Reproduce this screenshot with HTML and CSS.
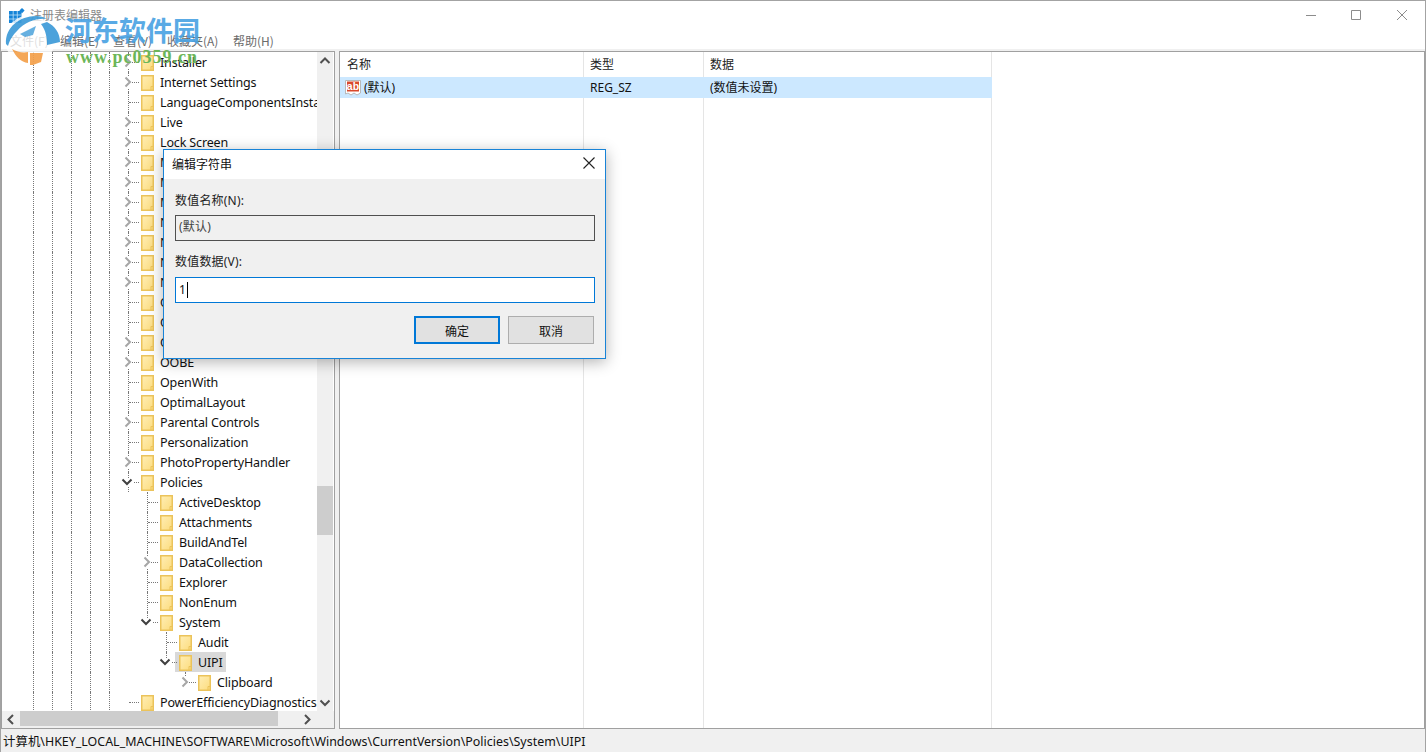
FILE: index.html
```html
<!DOCTYPE html>
<html lang="zh-CN">
<head>
<meta charset="utf-8">
<title>注册表编辑器</title>
<link rel="stylesheet" href="styles.css">
</head>
<body>
<svg class="sprite" width="0" height="0" aria-hidden="true">
  <defs>
    <linearGradient id="fg" x1="0" y1="0" x2="1" y2="1"><stop offset="0" stop-color="#ffeeb5"/><stop offset="1" stop-color="#fcdc7e"/></linearGradient>
    <symbol id="folder" viewBox="0 0 13 16">
      <path d="M.75.75H12.25V15.25H.75Z" fill="url(#fg)" stroke="#ebc35b" stroke-width="1.5"/>
      <path d="M10 11.5V15.5M10 11.5H12.5" fill="none" stroke="#ebc35b" stroke-width="1"/>
    </symbol>
    <symbol id="cr" viewBox="0 0 8 12"><path d="M1.5 1.5 6 6 1.5 10.5" fill="none" stroke="#a6a6a6" stroke-width="2"/></symbol>
    <symbol id="cd" viewBox="0 0 12 8"><path d="M1.5 1.5 6 6 10.5 1.5" fill="none" stroke="#404040" stroke-width="2"/></symbol>
  </defs>
</svg>
<div class="window">
  <header class="titlebar">
    <svg class="appicon" width="16" height="15" viewBox="0 0 16 15">
      <path d="M0 3H12.500V15H0Z" fill="#1584d8"/>
      <path d="M4.200 3V15M8.300 3V15M0 7H12.500M0 11H12.500" stroke="#bfe2f8" stroke-width=".8"/>
      <path d="M13 0l2.600 2.600-2.600 2.600-2.600-2.600Z" fill="#1584d8"/>
    </svg>
    <span class="apptitle">注册表编辑器</span>
    <div class="winctl">
      <svg class="ctl ctl-min" width="10" height="10" viewBox="0 0 10 10"><path d="M0 5.500H10" stroke="#8c8c8c"/></svg>
      <svg class="ctl ctl-max" width="10" height="10" viewBox="0 0 10 10"><path d="M.5.5H9.500V9.500H.5Z" fill="none" stroke="#8c8c8c"/></svg>
      <svg class="ctl ctl-close" width="10" height="10" viewBox="0 0 10 10"><path d="M0 0 10 10M10 0 0 10" stroke="#8c8c8c"/></svg>
    </div>
  </header>
  <nav class="menubar">
    <span class="menu m1">文件(F)</span>
    <span class="menu m2">编辑(E)</span>
    <span class="menu m3">查看(V)</span>
    <span class="menu m4">收藏夹(A)</span>
    <span class="menu">帮助(H)</span>
  </nav>
  <main class="main">
    <section class="treepanel">
      <div class="treewrap">
        <div class="tree">
          <div class="row"><i class="g"></i><i class="g"></i><i class="g"></i><i class="g"></i><i class="g"></i><span class="twig"><svg class="chev"><use href="#cr"/></svg></span><svg class="folder"><use href="#folder"/></svg><span class="label">Installer</span></div>
          <div class="row"><i class="g"></i><i class="g"></i><i class="g"></i><i class="g"></i><i class="g"></i><span class="twig"><svg class="chev"><use href="#cr"/></svg></span><svg class="folder"><use href="#folder"/></svg><span class="label">Internet Settings</span></div>
          <div class="row"><i class="g"></i><i class="g"></i><i class="g"></i><i class="g"></i><i class="g"></i><span class="twig"></span><svg class="folder"><use href="#folder"/></svg><span class="label">LanguageComponentsInstaller</span></div>
          <div class="row"><i class="g"></i><i class="g"></i><i class="g"></i><i class="g"></i><i class="g"></i><span class="twig"><svg class="chev"><use href="#cr"/></svg></span><svg class="folder"><use href="#folder"/></svg><span class="label">Live</span></div>
          <div class="row"><i class="g"></i><i class="g"></i><i class="g"></i><i class="g"></i><i class="g"></i><span class="twig"><svg class="chev"><use href="#cr"/></svg></span><svg class="folder"><use href="#folder"/></svg><span class="label">Lock Screen</span></div>
          <div class="row"><i class="g"></i><i class="g"></i><i class="g"></i><i class="g"></i><i class="g"></i><span class="twig"><svg class="chev"><use href="#cr"/></svg></span><svg class="folder"><use href="#folder"/></svg><span class="label">MCT</span></div>
          <div class="row"><i class="g"></i><i class="g"></i><i class="g"></i><i class="g"></i><i class="g"></i><span class="twig"><svg class="chev"><use href="#cr"/></svg></span><svg class="folder"><use href="#folder"/></svg><span class="label">Media Center</span></div>
          <div class="row"><i class="g"></i><i class="g"></i><i class="g"></i><i class="g"></i><i class="g"></i><span class="twig"><svg class="chev"><use href="#cr"/></svg></span><svg class="folder"><use href="#folder"/></svg><span class="label">MMDevices</span></div>
          <div class="row"><i class="g"></i><i class="g"></i><i class="g"></i><i class="g"></i><i class="g"></i><span class="twig"><svg class="chev"><use href="#cr"/></svg></span><svg class="folder"><use href="#folder"/></svg><span class="label">NcdAutoSetup</span></div>
          <div class="row"><i class="g"></i><i class="g"></i><i class="g"></i><i class="g"></i><i class="g"></i><span class="twig"><svg class="chev"><use href="#cr"/></svg></span><svg class="folder"><use href="#folder"/></svg><span class="label">NetCache</span></div>
          <div class="row"><i class="g"></i><i class="g"></i><i class="g"></i><i class="g"></i><i class="g"></i><span class="twig"><svg class="chev"><use href="#cr"/></svg></span><svg class="folder"><use href="#folder"/></svg><span class="label">NetworkServiceTriggers</span></div>
          <div class="row"><i class="g"></i><i class="g"></i><i class="g"></i><i class="g"></i><i class="g"></i><span class="twig"><svg class="chev"><use href="#cr"/></svg></span><svg class="folder"><use href="#folder"/></svg><span class="label">Notifications</span></div>
          <div class="row"><i class="g"></i><i class="g"></i><i class="g"></i><i class="g"></i><i class="g"></i><span class="twig"></span><svg class="folder"><use href="#folder"/></svg><span class="label">OEMInformation</span></div>
          <div class="row"><i class="g"></i><i class="g"></i><i class="g"></i><i class="g"></i><i class="g"></i><span class="twig"></span><svg class="folder"><use href="#folder"/></svg><span class="label">OneDriveRamps</span></div>
          <div class="row"><i class="g"></i><i class="g"></i><i class="g"></i><i class="g"></i><i class="g"></i><span class="twig"><svg class="chev"><use href="#cr"/></svg></span><svg class="folder"><use href="#folder"/></svg><span class="label">OnDemandInterfaceCache</span></div>
          <div class="row"><i class="g"></i><i class="g"></i><i class="g"></i><i class="g"></i><i class="g"></i><span class="twig"><svg class="chev"><use href="#cr"/></svg></span><svg class="folder"><use href="#folder"/></svg><span class="label">OOBE</span></div>
          <div class="row"><i class="g"></i><i class="g"></i><i class="g"></i><i class="g"></i><i class="g"></i><span class="twig"></span><svg class="folder"><use href="#folder"/></svg><span class="label">OpenWith</span></div>
          <div class="row"><i class="g"></i><i class="g"></i><i class="g"></i><i class="g"></i><i class="g"></i><span class="twig"></span><svg class="folder"><use href="#folder"/></svg><span class="label">OptimalLayout</span></div>
          <div class="row"><i class="g"></i><i class="g"></i><i class="g"></i><i class="g"></i><i class="g"></i><span class="twig"><svg class="chev"><use href="#cr"/></svg></span><svg class="folder"><use href="#folder"/></svg><span class="label">Parental Controls</span></div>
          <div class="row"><i class="g"></i><i class="g"></i><i class="g"></i><i class="g"></i><i class="g"></i><span class="twig"></span><svg class="folder"><use href="#folder"/></svg><span class="label">Personalization</span></div>
          <div class="row"><i class="g"></i><i class="g"></i><i class="g"></i><i class="g"></i><i class="g"></i><span class="twig"><svg class="chev"><use href="#cr"/></svg></span><svg class="folder"><use href="#folder"/></svg><span class="label">PhotoPropertyHandler</span></div>
          <div class="row"><i class="g"></i><i class="g"></i><i class="g"></i><i class="g"></i><i class="g"></i><span class="twig"><svg class="chev down"><use href="#cd"/></svg></span><svg class="folder"><use href="#folder"/></svg><span class="label">Policies</span></div>
          <div class="row"><i class="g"></i><i class="g"></i><i class="g"></i><i class="g"></i><i class="g"></i><i class="g off"></i><span class="twig"></span><svg class="folder"><use href="#folder"/></svg><span class="label">ActiveDesktop</span></div>
          <div class="row"><i class="g"></i><i class="g"></i><i class="g"></i><i class="g"></i><i class="g"></i><i class="g off"></i><span class="twig"></span><svg class="folder"><use href="#folder"/></svg><span class="label">Attachments</span></div>
          <div class="row"><i class="g"></i><i class="g"></i><i class="g"></i><i class="g"></i><i class="g"></i><i class="g off"></i><span class="twig"></span><svg class="folder"><use href="#folder"/></svg><span class="label">BuildAndTel</span></div>
          <div class="row"><i class="g"></i><i class="g"></i><i class="g"></i><i class="g"></i><i class="g"></i><i class="g off"></i><span class="twig"><svg class="chev"><use href="#cr"/></svg></span><svg class="folder"><use href="#folder"/></svg><span class="label">DataCollection</span></div>
          <div class="row"><i class="g"></i><i class="g"></i><i class="g"></i><i class="g"></i><i class="g"></i><i class="g off"></i><span class="twig"></span><svg class="folder"><use href="#folder"/></svg><span class="label">Explorer</span></div>
          <div class="row"><i class="g"></i><i class="g"></i><i class="g"></i><i class="g"></i><i class="g"></i><i class="g off"></i><span class="twig"></span><svg class="folder"><use href="#folder"/></svg><span class="label">NonEnum</span></div>
          <div class="row"><i class="g"></i><i class="g"></i><i class="g"></i><i class="g"></i><i class="g"></i><i class="g off"></i><span class="twig end"><svg class="chev down"><use href="#cd"/></svg></span><svg class="folder"><use href="#folder"/></svg><span class="label">System</span></div>
          <div class="row"><i class="g"></i><i class="g"></i><i class="g"></i><i class="g"></i><i class="g"></i><i class="g off"></i><i class="g off"></i><span class="twig"></span><svg class="folder"><use href="#folder"/></svg><span class="label">Audit</span></div>
          <div class="row"><i class="g"></i><i class="g"></i><i class="g"></i><i class="g"></i><i class="g"></i><i class="g off"></i><i class="g off"></i><span class="twig end"><svg class="chev down"><use href="#cd"/></svg></span><span class="selected"><svg class="folder"><use href="#folder"/></svg><span class="label">UIPI</span></span></div>
          <div class="row"><i class="g"></i><i class="g"></i><i class="g"></i><i class="g"></i><i class="g"></i><i class="g off"></i><i class="g off"></i><i class="g off"></i><span class="twig end"><svg class="chev"><use href="#cr"/></svg></span><svg class="folder"><use href="#folder"/></svg><span class="label">Clipboard</span></div>
          <div class="row"><i class="g"></i><i class="g"></i><i class="g"></i><i class="g"></i><i class="g"></i><span class="twig bare"></span><svg class="folder"><use href="#folder"/></svg><span class="label">PowerEfficiencyDiagnostics</span></div>
        </div>
        <div class="vscroll">
          <svg class="arrow" width="16" height="17" viewBox="0 0 16 17"><path d="M3.500 11 8 6.500 12.500 11" fill="none" stroke="#505050" stroke-width="2"/></svg>
          <div class="vtrack"><div class="vthumb"></div></div>
          <svg class="arrow" width="16" height="17" viewBox="0 0 16 17"><path d="M3.500 6.500 8 11 12.500 6.500" fill="none" stroke="#505050" stroke-width="2"/></svg>
        </div>
      </div>
      <div class="hscroll">
        <svg class="arrow" width="18" height="17" viewBox="0 0 18 17"><path d="M11 4 6.500 8.500 11 13" fill="none" stroke="#505050" stroke-width="2"/></svg>
        <div class="hthumb"></div>
        <svg class="arrow arrow-end" width="16" height="17" viewBox="0 0 16 17"><path d="M6 4 10.500 8.500 6 13" fill="none" stroke="#505050" stroke-width="2"/></svg>
      </div>
    </section>
    <section class="listpanel">
      <div class="cols">
        <div class="col c-name">
          <div class="head">名称</div>
          <div class="cell sel cell-name">
            <svg class="abicon" width="16" height="16" viewBox="0 0 16 16">
              <path d="M.5.5H15.500V13L12 15 9 13 6 15 3 13 .5 14Z" fill="#fff" stroke="#b9b9b9"/>
              <rect x="2" y="1.500" width="12" height="10" fill="#d9482b"/>
              <text x="8" y="10" class="abtext">ab</text>
            </svg>
            <span>(默认)</span>
          </div>
        </div>
        <div class="col c-type">
          <div class="head head-t">类型</div>
          <div class="cell sel">REG_SZ</div>
        </div>
        <div class="col c-data">
          <div class="head head-t">数据</div>
          <div class="cell sel">(数值未设置)</div>
        </div>
      </div>
    </section>
  </main>
  <footer class="statusbar">计算机\HKEY_LOCAL_MACHINE\SOFTWARE\Microsoft\Windows\CurrentVersion\Policies\System\UIPI</footer>
</div>

<div class="dialog" role="dialog">
  <div class="dlgtitle">
    <span>编辑字符串</span>
    <svg class="dlgclose" width="12" height="12" viewBox="0 0 12 12"><path d="M.5.5 11.500 11.500M11.500.5.500 11.500" stroke="#222" stroke-width="1.100"/></svg>
  </div>
  <div class="dlgbody">
    <div class="dlglabel">数值名称(N):</div>
    <div class="field readonly">(默认)</div>
    <div class="dlglabel second">数值数据(V):</div>
    <div class="field active"><span>1</span><i class="caret"></i></div>
    <div class="buttons">
      <button class="btn primary">确定</button>
      <button class="btn">取消</button>
    </div>
  </div>
</div>

<div class="watermark">
  <svg class="wmlogo" width="60" height="54" viewBox="0 0 60 54">
    <circle cx="28" cy="26" r="25" fill="#fff" opacity=".85"/>
    <path d="M4 30C3 13 18 2 34 2c4 0 8 1 11 3-11-1-22 3-30 12C11 21 8 25 6 32Z" fill="#3d9bd8"/>
    <path d="M45 8c8 4 13 11 13 20l-13 3c0-8-1-14-6-21Z" fill="#3d9bd8"/>
    <path d="M18 20 34 12 31 21 23 23Z" fill="#3d9bd8" opacity=".85"/>
    <path d="M10 35c5 3 11 4 16 3v11c-7-1-12-6-16-14Z" fill="#f4a04a"/>
    <path d="M28 39h13l-2 9-8 3h-3Z" fill="#f4a04a"/>
  </svg>
  <div class="wmcn">河东软件园</div>
  <div class="wmurl">www.pc0359.cn</div>
</div>
</body>
</html>
```
FILE: styles.css
```css
* { box-sizing: border-box; }
html, body { margin: 0; padding: 0; height: 100%; overflow: hidden; }
body {
  width: 1426px;
  height: 752px;
  position: relative;
  font-family: "Noto Sans", "Noto Sans CJK SC", sans-serif;
  font-size: 13px;
  color: #111;
  background: #f0f0f0;
}
.sprite { position: absolute; }
.window {
  height: 752px;
  display: flex;
  flex-direction: column;
  border-top: 1px solid #a3a3a3;
  border-left: 1px solid #a3a3a3;
  border-right: 1px solid #a3a3a3;
}

/* title + menu */
.titlebar {
  height: 29px;
  flex: none;
  display: flex;
  align-items: center;
  padding-left: 8px;
  background: #fff;
}
.appicon { flex: none; margin-right: 5px; margin-top: -1px; }
.apptitle { font-size: 12px; color: #8a8a8a; font-family: "Noto Sans CJK SC", sans-serif; margin-top: -2px; }
.winctl { margin-left: auto; display: flex; align-items: center; padding-right: 18px; gap: 35px; margin-top: -1px; }
.ctl { flex: none; }
.ctl-close { margin-left: 1px; }
.menubar {
  height: 21px;
  flex: none;
  display: flex;
  align-items: center;
  gap: 0;
  padding: 3px 0 0 9px;
  background: #fff;
  border-bottom: 2px solid #f0f0f0;
  font-family: "Noto Sans CJK SC", sans-serif;
  font-size: 12px;
  line-height: 16px;
  color: #6b6b6b;
}
.menu { flex: none; }
.m1 { width: 50px; }
.m2 { width: 53px; }
.m3 { width: 54px; }
.m4 { width: 66px; }

/* panes */
.main {
  height: 678px;
  flex: none;
  display: flex;
  gap: 4px;
}
.treepanel {
  width: 334px;
  flex: none;
  display: flex;
  flex-direction: column;
  border: 1px solid #a0a0a0;
  background: #fff;
}
.treewrap { height: 659px; flex: none; display: flex; }
.tree { width: 315px; flex: none; overflow: hidden; }
.row { height: 20px; display: flex; align-items: center; padding-left: 31px; white-space: nowrap; }
.g { width: 19px; height: 20px; flex: none; border-left: 1px dotted #777; }
.g.off { border-left-color: transparent; }
.twig {
  width: 13px;
  height: 20px;
  flex: none;
  position: relative;
  border-left: 1px dotted #777;
}
.twig::after {
  content: "";
  position: absolute;
  left: 0;
  right: 2px;
  top: 10px;
  border-top: 1px dotted #777;
}
.twig.end { border-left-color: transparent; }
.twig.end::before {
  content: "";
  position: absolute;
  left: -1px;
  top: 0;
  height: 10px;
  border-left: 1px dotted #777;
}
.twig.bare { border-left-color: transparent; }
.chev {
  position: absolute;
  z-index: 1;
  left: -5px;
  top: 4px;
  width: 8px;
  height: 12px;
  background: #fff;
}
.chev.down { left: -8px; top: 6px; width: 12px; height: 8px; }
.folder { width: 13px; height: 16px; flex: none; margin-top: 2px; }
.label { margin-left: 6px; line-height: 19px; font-size: 12.5px; letter-spacing: -.14px; color: #111; }
.selected { display: flex; align-items: center; height: 20px; margin-left: -4px; padding: 0 3px 0 4px; background: #d9d9d9; }

.vscroll { width: 16px; flex: none; display: flex; flex-direction: column; background: #f0f0f0; }
.vtrack { flex: 1; position: relative; padding-top: 417px; }
.vthumb { height: 49px; background: #cdcdcd; }
.arrow { flex: none; display: block; }
.hscroll { height: 17px; flex: none; display: flex; background: #f0f0f0; }
.hthumb { width: 258px; height: 15px; background: #cdcdcd; }
.arrow-end { margin-left: 21px; }

.listpanel { flex: 1; border: 1px solid #a0a0a0; background: #fff; overflow: hidden; }
.cols { display: flex; height: 100%; }
.col { flex: none; height: 100%; border-right: 1px solid #e5e5e5; }
.c-name { width: 244px; }
.c-type { width: 120px; }
.c-data { width: 288px; }
.head {
  height: 25px;
  padding-left: 7px;
  line-height: 24px;
  font-family: "Noto Sans CJK SC", sans-serif;
  font-size: 12px;
  color: #222;
}
.head-t { padding-left: 6px; }
.cell {
  height: 21px;
  padding-left: 6px;
  line-height: 21px;
  font-size: 12px;
  font-family: "Noto Sans", "Noto Sans CJK SC", sans-serif;
  margin-right: -1px;
}
.sel { background: #cce8ff; }
.cell-name { display: flex; align-items: center; padding-left: 5px; gap: 3px; }
.abicon { flex: none; }
.abtext { font-family: "Liberation Sans", sans-serif; font-size: 10.5px; font-weight: bold; fill: #fff; text-anchor: middle; }

.statusbar {
  flex: 1;
  display: flex;
  align-items: center;
  padding-left: 2px;
  background: #f0f0f0;
  font-size: 12.45px;
  white-space: nowrap;
  color: #111;
}

/* dialog */
.dialog {
  position: absolute;
  left: 163px;
  top: 149px;
  width: 443px;
  height: 210px;
  border: 1px solid #1883d7;
  background: #f0f0f0;
  box-shadow: 0 3px 14px rgba(0,0,0,.3);
}
.dlgtitle {
  height: 29px;
  display: flex;
  align-items: center;
  padding: 0 10px 3px 8px;
  background: #fff;
  justify-content: space-between;
  font-family: "Noto Sans CJK SC", sans-serif;
  font-size: 12px;
  color: #111;
}
.dlgbody { padding: 12px 10px 0 11px; font-family: "Noto Sans", "Noto Sans CJK SC", sans-serif; font-size: 12px; letter-spacing: .2px; }
.dlglabel { height: 20px; line-height: 20px; margin-bottom: 4px; color: #222; }
.dlglabel.second { margin-top: 11px; margin-bottom: 5px; }
.field { height: 26px; width: 420px; line-height: 22px; padding-left: 3px; display: flex; align-items: center; }
.field.readonly { border: 1px solid #505050; background: #f0f0f0; color: #444; padding-bottom: 2px; }
.field.active { border: 1px solid #0078d7; background: #fff; padding-left: 3px; }
.caret { width: 1px; height: 16px; background: #000; margin-left: 1px; }
.buttons { display: flex; justify-content: flex-end; gap: 8px; margin-top: 13px; padding-right: 1px; }
.btn {
  width: 86px;
  height: 28px;
  padding: 0;
  background: #e1e1e1;
  border: 1px solid #adadad;
  border-radius: 0;
  font-family: "Noto Sans CJK SC", sans-serif;
  font-size: 12px;
  color: #111;
}
.btn.primary { border: 2px solid #0078d7; }

/* watermark */
.watermark { position: absolute; left: 0; top: 0; width: 210px; height: 70px; z-index: 5; pointer-events: none; }
.wmlogo { position: absolute; left: 2px; top: 14px; opacity: .92; }
.wmcn {
  position: absolute;
  left: 65px;
  top: 11px;
  font-family: "Noto Sans CJK SC", sans-serif;
  font-weight: 700;
  font-size: 27px;
  line-height: 38px;
  color: #4ba3e3;
  opacity: .92;
  white-space: nowrap;
}
.wmurl {
  position: absolute;
  left: 66px;
  top: 46px;
  font-family: "Liberation Serif", serif;
  font-weight: 700;
  font-size: 18px;
  line-height: 22px;
  letter-spacing: 1px;
  color: #6cb658;
  white-space: nowrap;
}
```
